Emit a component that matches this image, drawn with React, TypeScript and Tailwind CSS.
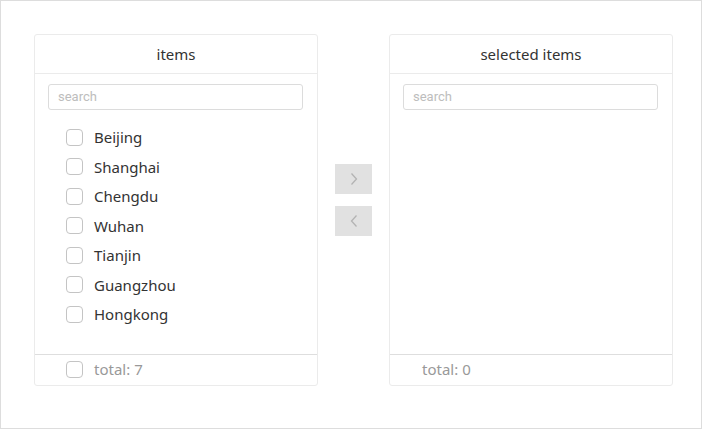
import React, { useState } from 'react';

const cities = ['Beijing', 'Shanghai', 'Chengdu', 'Wuhan', 'Tianjin', 'Guangzhou', 'Hongkong'];

const Checkbox: React.FC = () => (
  <span className="inline-block w-[17px] h-[17px] rounded-[4px] border border-[#c4c4c4] bg-white shrink-0" />
);

interface PanelProps {
  title: string;
  items: string[];
  showFooterCheckbox?: boolean;
}

const Panel: React.FC<PanelProps> = ({ title, items, showFooterCheckbox }) => {
  const [query, setQuery] = useState('');
  const visible = items.filter((c) => c.toLowerCase().includes(query.toLowerCase()));

  return (
    <div className="w-[284px] h-[352px] flex flex-col border border-[#ebebeb] rounded-[3px] bg-white">
      {/* Header */}
      <div className="h-[39px] flex items-center justify-center border-b border-[#ebebeb] text-[15px] text-[#333]">
        {title}
      </div>

      {/* Search */}
      <div className="pl-[13px] pr-[14px] pt-[9px]">
        <input
          type="text"
          placeholder="search"
          value={query}
          onChange={(e) => setQuery(e.target.value)}
          className="w-full h-[26px] px-[9px] border border-[#dcdcdc] rounded-[3px] text-[13px] text-[#333] placeholder-[#bdbdbd] outline-none font-['Roboto',sans-serif]"
        />
      </div>

      {/* List */}
      <ul className="flex-1 pt-[13px]">
        {visible.map((city) => (
          <li key={city} className="h-[29.5px] flex items-center pl-[31px] gap-[11px] text-[15px] text-[#333]">
            <Checkbox />
            <span>{city}</span>
          </li>
        ))}
      </ul>

      {/* Footer */}
      <div
        className={`h-[31px] flex items-center gap-[11px] border-t border-[#dedede] text-[15px] text-[#999] pb-[2px] ${
          showFooterCheckbox ? 'pl-[31px]' : 'pl-[32px]'
        }`}
      >
        {showFooterCheckbox && <Checkbox />}
        <span>total: {items.length}</span>
      </div>
    </div>
  );
};

const Chevron: React.FC<{ dir: 'left' | 'right' }> = ({ dir }) => (
  <svg width="8" height="14" viewBox="0 0 8 14" fill="none">
    <path
      d={dir === 'right' ? 'M1.5 1.5 L6.5 7 L1.5 12.5' : 'M6.5 1.5 L1.5 7 L6.5 12.5'}
      stroke="#b3b3b3"
      strokeWidth="1.3"
    />
  </svg>
);

export default function App() {
  return (
    <div className="w-[702px] h-[429px] border border-[#dddddd] bg-white pt-[33px] pl-[33px] font-['Noto_Sans','Open_Sans',sans-serif]">
      <div className="flex items-start">
        <Panel title="items" items={cities} showFooterCheckbox />
        <div className="w-[71px] h-[352px] flex flex-col items-center justify-center gap-[12px] pb-[20px]">
          <button className="w-[37px] h-[30px] bg-[#e1e1e1] flex items-center justify-center">
            <Chevron dir="right" />
          </button>
          <button className="w-[37px] h-[30px] bg-[#e1e1e1] flex items-center justify-center">
            <Chevron dir="left" />
          </button>
        </div>
        <Panel title="selected items" items={[]} />
      </div>
    </div>
  );
}
